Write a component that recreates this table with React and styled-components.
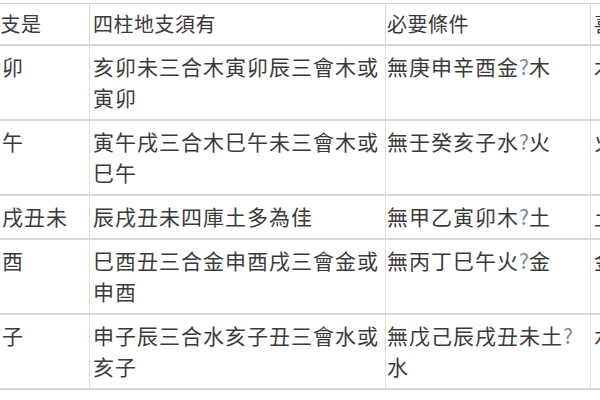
import styled, { createGlobalStyle } from "styled-components";

const GlobalStyle = createGlobalStyle`
  html, body {
    margin: 0;
    padding: 0;
    background: #fff;
  }
`;

/* ─── Frame ─── */
const Frame = styled.div`
  width: 600px;
  height: 400px;
  overflow: hidden;
  padding-top: 3px;
  box-sizing: border-box;
  background: #fff;
`;

/* ─── Table ─── */
const Table = styled.table`
  margin-left: -24px;
  border-collapse: collapse;
  table-layout: fixed;
  width: 740px;
  font-family: "Noto Sans CJK TC", "Noto Sans CJK SC", sans-serif;
  color: #3a3a3a;
`;

const Th = styled.th`
  font-size: 20px;
  font-weight: 400;
  line-height: 31px;
  letter-spacing: 0.5px;
  text-align: left;
  vertical-align: top;
  padding: 4px 2px 5px ${({ $pl }) => $pl ?? 3}px;
  border: 1px solid #d6d6d6;
  border-top-color: #d0d0d0;
  border-bottom: 2px solid #d8d8d8;
  white-space: nowrap;
  overflow: hidden;
`;

const Td = styled.td`
  font-size: 21px;
  line-height: 31px;
  letter-spacing: 1px;
  vertical-align: top;
  padding: 5px 2px 6px ${({ $pl }) => $pl ?? 3}px;
  border: 1px solid #dedede;
  border-bottom: 2px solid #d8d8d8;
  word-break: break-all;
`;

const Q = styled.span`
  color: #7a8a96;
  letter-spacing: 0;
`;

const rows = [
  { branch: "寅卯", need: "亥卯未三合木寅卯辰三會木或寅卯", cond: ["無庚申辛酉金", "木"], use: "木" },
  { branch: "巳午", need: "寅午戌三合木巳午未三會木或巳午", cond: ["無壬癸亥子水", "火"], use: "火" },
  { branch: "辰戌丑未", need: "辰戌丑未四庫土多為佳", cond: ["無甲乙寅卯木", "土"], use: "土" },
  { branch: "申酉", need: "巳酉丑三合金申酉戌三會金或申酉", cond: ["無丙丁巳午火", "金"], use: "金" },
  { branch: "亥子", need: "申子辰三合水亥子丑三會水或亥子", cond: ["無戊己辰戌丑未土", "水"], use: "水" },
];

export default function App() {
  return (
    <>
      <GlobalStyle />
      <Frame>
        <Table>
          <colgroup>
            <col style={{ width: 113 }} />
            <col style={{ width: 296 }} />
            <col style={{ width: 205 }} />
            <col style={{ width: 126 }} />
          </colgroup>
          <thead>
            <tr>
              <Th>月支是</Th>
              <Th>四柱地支須有</Th>
              <Th $pl={1}>必要條件</Th>
              <Th>喜用神</Th>
            </tr>
          </thead>
          <tbody>
            {rows.map((r) => (
              <tr key={r.branch}>
                <Td>{r.branch}</Td>
                <Td>{r.need}</Td>
                <Td $pl={1}>
                  {r.cond[0]}
                  <Q>?</Q>
                  {r.cond[1]}
                </Td>
                <Td>{r.use}</Td>
              </tr>
            ))}
          </tbody>
        </Table>
      </Frame>
    </>
  );
}
